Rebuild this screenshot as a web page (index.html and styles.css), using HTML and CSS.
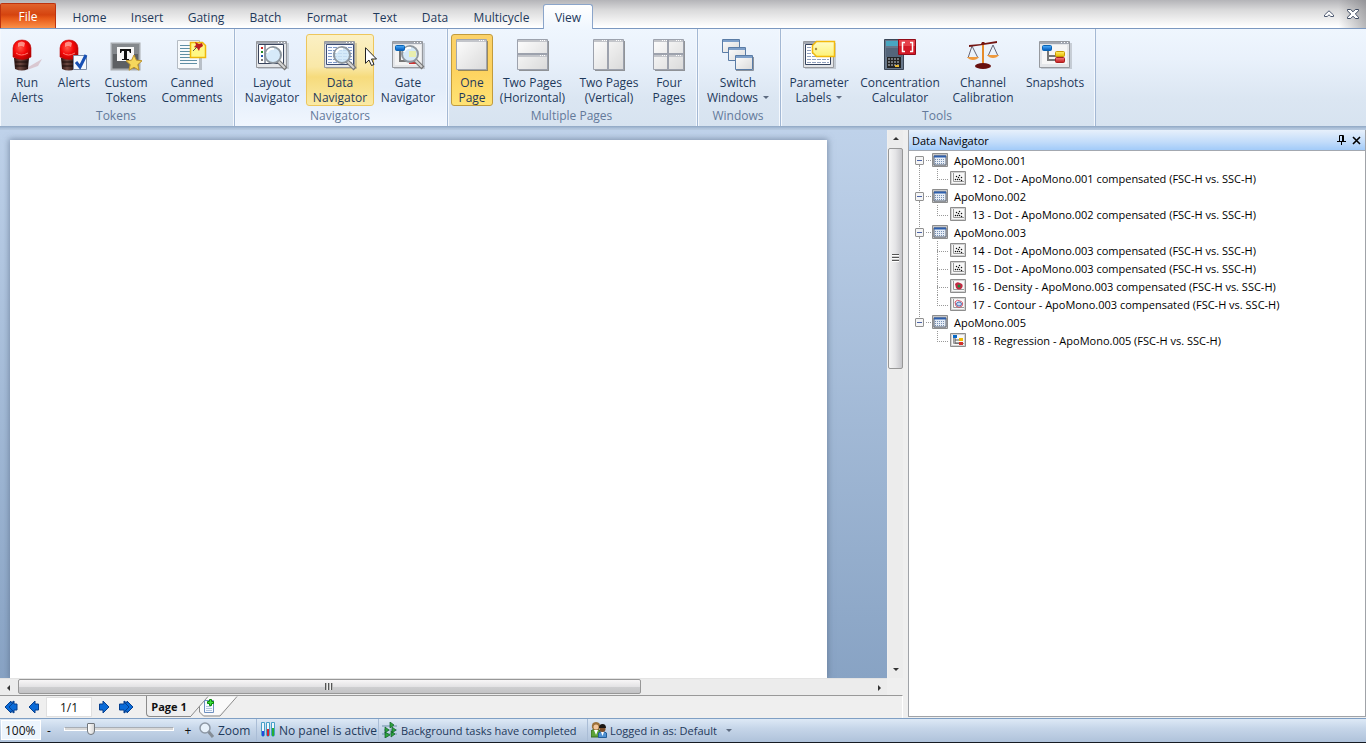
FILE: index.html
```html
<!DOCTYPE html>
<html lang="en">
<head>
<meta charset="utf-8">
<title>Data Navigator</title>
<link rel="stylesheet" href="styles.css">
</head>
<body>
<svg class="defs" aria-hidden="true">
  <defs>
    <linearGradient id="pg" x1="0" y1="0" x2="1" y2="1"><stop offset="0" stop-color="#fdfdfd"/><stop offset="1" stop-color="#dadada"/></linearGradient>
    <radialGradient id="dome" cx=".4" cy=".4" r=".7"><stop offset="0" stop-color="#ff5a4a"/><stop offset=".5" stop-color="#f60808"/><stop offset="1" stop-color="#a80000"/></radialGradient>
    <linearGradient id="base" x1="0" x2="1"><stop offset="0" stop-color="#2a1412"/><stop offset=".4" stop-color="#6d4840"/><stop offset="1" stop-color="#1e0d0c"/></linearGradient>
    <linearGradient id="tag" x1="0" y1="0" x2="0" y2="1"><stop offset="0" stop-color="#fffcc8"/><stop offset="1" stop-color="#fdf274"/></linearGradient>
    <linearGradient id="blue" x1="0" y1="0" x2="0" y2="1"><stop offset="0" stop-color="#4fb0ff"/><stop offset="1" stop-color="#0057b8"/></linearGradient>
    <linearGradient id="red" x1="0" y1="0" x2="0" y2="1"><stop offset="0" stop-color="#f58080"/><stop offset="1" stop-color="#c4191c"/></linearGradient>
    <linearGradient id="yel" x1="0" y1="0" x2="0" y2="1"><stop offset="0" stop-color="#fff36b"/><stop offset="1" stop-color="#e8b800"/></linearGradient>
    <g id="siren">
      <path d="M3 19h15l-1 11q-6 3-13 0z" fill="url(#base)"/>
      <path d="M4 23h13M4 27h13" stroke="#180a08" stroke-width="1"/>
      <path d="M2 18V9q1-8 9-8t9 8v9q-8 5-18 0z" fill="url(#dome)" stroke="#c40a0a" stroke-width=".6"/>
      <path d="M7 4q4-3 7 0l-1 4q-3-2-6 0z" fill="#ffa59a" opacity=".8"/>
      <path d="M5 14q5 4 12 0" stroke="#ff7a70" fill="none"/>
    </g>
    <g id="frame">
      <path d="M2 4h31v26H2z" fill="#000" opacity=".15"/>
      <path d="M.5 2.500h30v26H.5z" fill="#e4e6e9" stroke="#96999e"/>
      <path d="M1 3h29v2H1z" fill="#a3a8b2"/><path d="M22 3.500h1m2 0h1m2 0h1" stroke="#fff"/>
    </g>
    <g id="lens">
      <path d="m22 22 8 8" stroke="#777" stroke-width="4"/><path d="m22 22 7 7" stroke="#d5d5d5" stroke-width="2"/>
      <circle cx="17" cy="16" r="8" fill="#cfe6f8" fill-opacity=".85" stroke="#8e979f" stroke-width="2"/>
      <path d="M11 14q2-5 7-4" stroke="#fff" stroke-width="2" fill="none"/>
    </g>
    <g id="nodes">
      <path d="M9 9v12h12M9 17h10v-4" fill="none" stroke="#777" stroke-width="2"/>
      <rect x="3.500" y="6.500" width="9" height="5" rx="1" fill="url(#blue)" stroke="#0a64b4"/>
      <rect x="16.500" y="12.500" width="9" height="5" rx="1" fill="url(#yel)" stroke="#c99a00"/>
      <rect x="16.500" y="18.500" width="9" height="5" rx="1" fill="url(#red)" stroke="#a8201e"/>
    </g>
    <symbol id="t-sheet" viewBox="0 0 16 14"><path d="M.5.500h15v13H.5z" fill="#c7c7c7" stroke="#8d8d8d"/><path d="M2 3h12v9H2z" fill="#e6edf6" stroke="#58616f"/><path d="M2 2.500h12v2H2z" fill="#2d5fae"/><path d="M3 6.500h10M3 8.500h10M3 10.500h10" stroke="#7890b4" stroke-dasharray="1 1"/></symbol>
    <g id="t-box"><path d="M.5.500h15v13H.5z" fill="#d2d2d2" stroke="#8d8d8d"/><path d="M2 2h12v10H2z" fill="#f8f8f8"/><path d="M3.500 2v8.500H14" fill="none" stroke="#9a9a9a"/></g>
    <symbol id="t-dot" viewBox="0 0 16 14"><use href="#t-box"/><path d="M6 5h1v1H6zM8 6h1v1H8zM9 4h1v1H9zM7 8h1v1H7zM9 8h1v1H9zM11 6h1v1h-1zM11 9h1v1h-1zM5 8h1v1H5z" fill="#111" stroke="#111" stroke-width=".3"/></symbol>
    <symbol id="t-density" viewBox="0 0 16 14"><use href="#t-box"/><path d="M5 5q2-3 5-1 4 1 2 5-3 3-6 0z" fill="#c22943"/><circle cx="9" cy="7" r="1.500" fill="#198b3b"/></symbol>
    <symbol id="t-contour" viewBox="0 0 16 14"><use href="#t-box"/><path d="M5 5q2-3 5-1 4 1 2 5-3 3-6 0z" fill="none" stroke="#d15367"/><ellipse cx="9" cy="7" rx="2.500" ry="2" fill="#c9dcf6" stroke="#4671b5"/></symbol>
    <symbol id="t-reg" viewBox="0 0 16 14"><use href="#t-box"/><path d="M5 4v6h5M5 7h5" stroke="#555" fill="none"/><path d="M3 2h4v3H3z" fill="#0768c6"/><path d="M9 5h4v3H9z" fill="#edb900"/><path d="M9 9h4v3H9z" fill="#d2322e"/></symbol>
  </defs>
</svg>

<header class="tabbar">
  <nav class="tabs" aria-label="Ribbon tabs">
    <button class="file">File</button>
    <button class="tab tab-home">Home</button>
    <button class="tab tab-insert">Insert</button>
    <button class="tab tab-gating">Gating</button>
    <button class="tab tab-batch">Batch</button>
    <button class="tab tab-format">Format</button>
    <button class="tab tab-short">Text</button>
    <button class="tab tab-short">Data</button>
    <button class="tab tab-multi">Multicycle</button>
    <button class="tab tab-short active">View</button>
  </nav>
  <div class="winbtns">
    <button aria-label="Minimize ribbon"><svg width="10" height="8" viewBox="0 0 10 8"><path d="M.5 5 5 .8 9.500 5v1.500H6.800L5 4.800 3.200 6.500H.5z" fill="#fff" stroke="#4c5870"/></svg></button>
    <button aria-label="Close"><svg width="12" height="10" viewBox="0 0 12 10"><path d="M.5.500h3.200L6 2.800 8.300.500h3.200v1.300L8.300 5l3.200 3.200v1.300H8.300L6 7.200 3.700 9.500H.5V8.200L3.700 5 .5 1.800z" fill="#fff" stroke="#3d4a60"/></svg></button>
  </div>
</header>

<section class="ribbon">
  <div class="group">
    <div class="tools">
      <button class="tool w-48"><svg class="ico" viewBox="0 0 32 32"><path d="M14 30 31 20l-4 7-11 4z" fill="#c58b93" opacity=".4"/><use href="#siren"/></svg><span>Run<br>Alerts</span></button>
      <button class="tool w-46"><svg class="ico" viewBox="0 0 32 32"><use href="#siren"/><path d="M15.500 16.500h13v14h-13z" fill="#f4f8fd" stroke="#7c8da6"/><path d="m18 23 4 5 6-12" fill="none" stroke="#1750b5" stroke-width="3"/></svg><span>Alerts</span></button>
      <button class="tool w-58"><svg class="ico" viewBox="0 0 32 32"><path d="M1.500 4.500h28v26h-28z" fill="#5d6063" stroke="#a9adb1" stroke-width="2"/><path d="M2 5h27v10H2z" fill="#85898d"/><path d="M7 8h17v14H7z" fill="#f7f7f7"/><path d="M10 10h11v4h-1l-1-2h-2v8h2v1h-7v-1h2v-8h-2l-1 2h-1z" fill="#111"/><path d="m24 16 2.400 5.200 5.600.6-4.200 3.800 1.200 5.600-5-2.900-5 2.900 1.200-5.600-4.200-3.800 5.600-.6z" fill="#f5d75c" stroke="#bd922a"/></svg><span>Custom<br>Tokens</span></button>
      <button class="tool w-74"><svg class="ico" viewBox="0 0 32 32"><path d="M3 3h23v28H3z" opacity=".2"/><path d="M1.500 1.500h22v28h-22z" fill="#f7fafc" stroke="#b5bcc4"/><path d="M4 6.500h10M4 9.500h10M4 12.500h10M4 15.500h10M4 18.500h17M4 21.500h17M4 24.500h17" stroke="#5f8fa5"/><path d="M14.500 3.500h12l3 3v12h-15z" fill="#fff885" stroke="#efb70a" stroke-width="1.500"/><path d="m19 3 4 2 3-1 1 3-3 2-1 3-2-3-3-1 2-2z" fill="#c02020"/><path d="m21 8-4 4" stroke="#555"/></svg><span>Canned<br>Comments</span></button>
    </div>
    <h2>Tokens</h2>
  </div>
  <div class="group hot">
    <div class="tools">
      <button class="tool w-68"><svg class="ico" viewBox="0 0 32 32"><use href="#frame"/><path d="M2.500 5.500h25v19h-25z" fill="#fff" stroke="#39445c"/><path d="M9 6v18" stroke="#39445c"/><path d="M5 8h2v2H5z" fill="#c22"/><path d="M5 12h2v2H5z" fill="#282"/><path d="M5 16h2v2H5z" fill="#25a"/><path d="M5 20h2v2H5z" fill="#777"/><use href="#lens"/></svg><span>Layout<br>Navigator</span></button>
      <button class="tool w-68 hover"><svg class="ico" viewBox="0 0 32 32"><use href="#frame"/><path d="M2.500 5.500h27v20h-27z" fill="#f8faff" stroke="#3b4c74"/><path d="M4 8.500h24M4 11.500h24M4 14.500h24M4 17.500h24M4 20.500h24M4 23.500h24" stroke="#7e9ac9" stroke-dasharray="4 1"/><use href="#lens" x="1"/></svg><span>Data<br>Navigator</span>
        <svg class="cursor" viewBox="0 0 12 19"><path d="M.5.700v15.600L4 13l2.500 5.500 2.500-1L6.500 12h5z" fill="#fff" stroke="#222"/></svg></button>
      <button class="tool w-68"><svg class="ico" viewBox="0 0 32 32"><use href="#frame"/><path d="M3 6h26v20H3z" fill="#f3f3f3"/><path d="M8 11v11h9" fill="none" stroke="#777" stroke-width="2"/><path d="M17 21h8v4h-8z" fill="#c33"/><use href="#lens" x="1" y="-1"/><rect x="3.500" y="6.500" width="9" height="5" rx="1" fill="url(#blue)" stroke="#0a64b4"/><path d="M17 12h7v6h-7z" fill="#f0f090" opacity=".7"/></svg><span>Gate<br>Navigator</span></button>
    </div>
    <h2>Navigators</h2>
  </div>
  <div class="group">
    <div class="tools">
      <button class="tool w-42 checked"><svg class="ico" viewBox="0 0 32 32"><path d="M2 2h30v30H2z" fill="#555" opacity=".6"/><path d="M.5.500h30v30H.5z" fill="url(#pg)" stroke="#a0a5b0"/><path d="M1 2h29" stroke="#c3c5ca" stroke-width="2"/><path d="M23 1.500h6" stroke="#fff" stroke-dasharray="1 1"/></svg><span>One<br>Page</span></button>
      <button class="tool w-78"><svg class="ico" viewBox="0 0 32 32"><path d="M2 2h30v30H2z" fill="#555" opacity=".6"/><path d="M.5.500h30v30H.5z" fill="url(#pg)" stroke="#9da2ad"/><path d="M1 2h29M1 17h29" stroke="#c3c5ca" stroke-width="2"/><path d="M1 15h29" stroke="#9da2ad" stroke-width="2"/><path d="M23 1.500h6m-6 15h6" stroke="#fff" stroke-dasharray="1 1"/></svg><span>Two Pages<br>(Horizontal)</span></button>
      <button class="tool w-74"><svg class="ico" viewBox="0 0 32 32"><path d="M2 2h30v30H2z" fill="#555" opacity=".6"/><path d="M.5.500h30v30H.5z" fill="url(#pg)" stroke="#9da2ad"/><path d="M1 2h29" stroke="#c3c5ca" stroke-width="2"/><path d="M15 1v29" stroke="#9da2ad" stroke-width="2"/><path d="M9 1.500h5m9 0h6" stroke="#fff" stroke-dasharray="1 1"/></svg><span>Two Pages<br>(Vertical)</span></button>
      <button class="tool w-46"><svg class="ico" viewBox="0 0 32 32"><path d="M2 2h30v30H2z" fill="#555" opacity=".6"/><path d="M.5.500h30v30H.5z" fill="url(#pg)" stroke="#9da2ad"/><path d="M1 2h29M1 17h29" stroke="#c3c5ca" stroke-width="2"/><path d="M15 1v29M1 15h29" stroke="#9da2ad" stroke-width="2"/><path d="M9 1.500h5m9 0h6m-20 15h5m9 0h6" stroke="#fff" stroke-dasharray="1 1"/></svg><span>Four<br>Pages</span></button>
    </div>
    <h2>Multiple Pages</h2>
  </div>
  <div class="group">
    <div class="tools">
      <button class="tool w-74"><svg class="ico" viewBox="0 0 32 32"><g fill="url(#pg)" stroke="#5a7ca6"><path d="M.5.500h17v13H.5z"/><path d="M6.500 8.500h17v13h-17z"/><path d="M13.500 16.500h17v14h-17z"/></g><path d="M1 2h16M7 10h16M14 18h16" stroke="#7d9fc9" stroke-width="2"/><path d="M14 31.500h17.500V18" fill="none" stroke="#8b929c"/></svg><span>Switch<br><span class="drop">Windows</span></span></button>
    </div>
    <h2>Windows</h2>
  </div>
  <div class="group">
    <div class="tools">
      <button class="tool w-70"><svg class="ico" viewBox="0 0 32 32"><use href="#frame"/><path d="M2.500 5.500h25v20h-25z" fill="#fff" stroke="#35445f"/><path d="M4 8.500h22M4 11.500h22M4 14.500h22M4 17.500h22M4 20.500h22M4 23.500h22" stroke="#91a1bf" stroke-dasharray="4 1"/><path d="m9.500 6.500 4-4h18v15h-18l-4-4z" fill="url(#tag)" stroke="#f3b90b" stroke-width="1.500"/><circle cx="13" cy="10" r="1.200" fill="#a58d42"/></svg><span>Parameter<br><span class="drop">Labels</span></span></button>
      <button class="tool w-92"><svg class="ico" viewBox="0 0 32 32"><path d="M.5.500h19v30H.5z" fill="#68778a" stroke="#3b4758"/><path d="M2 2h14v5H2z" fill="#49a6c1"/><path d="M2 9h16v9H2z" fill="#54657a"/><path d="M3 18h14v11H3z" fill="#222"/><path d="M4 20h12M4 23h12M4 26h12" stroke="#c5ccd4" stroke-dasharray="2 1"/><path d="M11 26h4v2h-4z" fill="#e8ba35"/><path d="M14.500.500h17v15h-17z" fill="#d31927" stroke="#920c19"/><path d="M15 1h16v6H15z" fill="#f15a62" opacity=".6"/><path d="M21 3.500h-2.500v9H21M26 3.500h2.500v9H26" stroke="#fff" stroke-width="1.500" fill="none"/></svg><span>Concentration<br>Calculator</span></button>
      <button class="tool w-74"><svg class="ico" viewBox="0 0 32 32"><path d="M5 7 1 19m4-12 6 12M26 6l-5 11m5-11 5 11" stroke="#667" fill="none"/><path d="M16 4v22" stroke="#e58b2c" stroke-width="2"/><path d="m2 6 12-1 1-2h2l1 1 12-2v2L2 8z" fill="#741512"/><path d="M0 18h12q-2 3-6 3t-6-3M20 16h12q-2 3-6 3t-6-3" fill="#ef9a3e"/><ellipse cx="16" cy="27" rx="8" ry="3" fill="#68100e"/></svg><span>Channel<br>Calibration</span></button>
      <button class="tool w-70"><svg class="ico" viewBox="0 0 32 32"><use href="#frame"/><path d="M3 6h25v19H3z" fill="#f6f6f6"/><use href="#nodes"/></svg><span>Snapshots</span></button>
    </div>
    <h2>Tools</h2>
  </div>
</section>

<main class="work">
  <section class="editor">
    <div class="view">
      <div class="canvas"><div class="page"></div></div>
      <div class="vbar"><button class="arrow" aria-label="Scroll up"><i class="tri up"></i></button><div class="vtrack"><div class="vthumb"><i class="grip-v"></i></div></div><button class="arrow" aria-label="Scroll down"><i class="tri down"></i></button></div>
    </div>
    <div class="hbar"><button class="arrow" aria-label="Scroll left"><i class="tri left"></i></button><div class="htrack"><div class="hthumb"><i class="grip-h"></i></div></div><button class="arrow" aria-label="Scroll right"><i class="tri right"></i></button></div>
    <div class="pager">
      <button aria-label="First page"><svg width="16" height="14" viewBox="0 0 16 14"><path d="M1 7 7 1v2l3-2v3h3v6h-3v3L7 11v2z" fill="#0a6bd8" stroke="#053f8e"/><path d="m10 2-5 5 5 5" fill="none" stroke="#053f8e"/></svg></button>
      <button aria-label="Previous page"><svg width="12" height="14" viewBox="0 0 12 14"><path d="m1 7 6-6v3h3.500v6H7v3z" fill="#0a6bd8" stroke="#053f8e"/></svg></button>
      <input class="pageno" aria-label="Page number" value="1/1">
      <button aria-label="Next page"><svg width="12" height="14" viewBox="0 0 12 14"><path d="M11 7 5 1v3H1.500v6H5v3z" fill="#0a6bd8" stroke="#053f8e"/></svg></button>
      <button aria-label="Last page"><svg width="16" height="14" viewBox="0 0 16 14"><path d="M15 7 9 1v2L6 1v3H1.500v6H6v3l3-2v2z" fill="#0a6bd8" stroke="#053f8e"/><path d="m6 2 5 5-5 5" fill="none" stroke="#053f8e"/></svg></button>
      <button class="sheet">Page 1</button>
      <button class="addsheet" aria-label="Add page"><svg width="50" height="22" viewBox="0 0 50 22"><path d="m9 10 8-9h29L28 19H13l-4-4z" fill="#fff" opacity=".7"/><path d="M0 20 17 .5M8.500 10v6l4 4H29L46 .5" fill="none" stroke="#8b8b8b"/><path d="M13.500 4.500h9v12h-9z" fill="#f5f9ff" stroke="#6d8fbf"/><path d="M15 10.500h5m-5 2h6m-6 2h6" stroke="#b0c3dd"/><path d="M16.500 5.500h2v-2h2v2h2v2h-2v2h-2v-2h-2z" fill="#3be03b" stroke="#078907"/></svg></button>
    </div>
  </section>
  <aside class="nav">
    <header class="navhead"><h1>Data Navigator</h1>
      <button aria-label="Pin"><svg width="9" height="10" viewBox="0 0 9 10"><path d="M2.500 6V.5h4V6M0 6.500h9M4.500 7v3M5.500 1v5" fill="none" stroke="#000"/></svg></button>
      <button aria-label="Close panel"><svg width="9" height="9" viewBox="0 0 9 9"><path d="m1 1 7 7m0-7L1 8" stroke="#000" stroke-width="1.600"/></svg></button>
    </header>
    <ul class="tree">
      <li><div class="node"><button class="exp" aria-label="Collapse"></button><i class="dots"></i><svg><use href="#t-sheet"/></svg>ApoMono.001</div>
        <ul><li><div class="leaf"><svg><use href="#t-dot"/></svg>12 - Dot - ApoMono.001 compensated (FSC-H vs. SSC-H)</div></li></ul></li>
      <li><div class="node"><button class="exp" aria-label="Collapse"></button><i class="dots"></i><svg><use href="#t-sheet"/></svg>ApoMono.002</div>
        <ul><li><div class="leaf"><svg><use href="#t-dot"/></svg>13 - Dot - ApoMono.002 compensated (FSC-H vs. SSC-H)</div></li></ul></li>
      <li><div class="node"><button class="exp" aria-label="Collapse"></button><i class="dots"></i><svg><use href="#t-sheet"/></svg>ApoMono.003</div>
        <ul><li><div class="leaf"><svg><use href="#t-dot"/></svg>14 - Dot - ApoMono.003 compensated (FSC-H vs. SSC-H)</div></li>
        <li><div class="leaf"><svg><use href="#t-dot"/></svg>15 - Dot - ApoMono.003 compensated (FSC-H vs. SSC-H)</div></li>
        <li><div class="leaf"><svg><use href="#t-density"/></svg>16 - Density - ApoMono.003 compensated (FSC-H vs. SSC-H)</div></li>
        <li><div class="leaf"><svg><use href="#t-contour"/></svg>17 - Contour - ApoMono.003 compensated (FSC-H vs. SSC-H)</div></li></ul></li>
      <li><div class="node"><button class="exp" aria-label="Collapse"></button><i class="dots"></i><svg><use href="#t-sheet"/></svg>ApoMono.005</div>
        <ul><li><div class="leaf"><svg><use href="#t-reg"/></svg>18 - Regression - ApoMono.005 (FSC-H vs. SSC-H)</div></li></ul></li>
    </ul>
  </aside>
</main>

<footer class="status">
  <input class="percent" aria-label="Zoom percent" value="100%">
  <button class="step">-</button>
  <input class="slider" type="range" aria-label="Zoom" min="0" max="100" value="22">
  <button class="step">+</button>
  <button class="item i-zoom"><svg viewBox="0 0 16 16"><path d="m9 9 5 6" stroke="#858d96" stroke-width="3"/><circle cx="6" cy="6" r="5" fill="#e8f2fb" stroke="#8d98a5" stroke-width="1.500"/></svg>Zoom</button>
  <button class="item i-panel"><svg viewBox="0 0 16 16"><g fill="#eef6fd" stroke="#46a0c8"><path d="M1.500.500h3v13q-1.500 2-3 0zM6.500.500h3v13q-1.500 2-3 0zM11.500.500h3v13q-1.500 2-3 0z"/></g><path d="M2 9h2v5H2z" fill="#2846dd"/><path d="M7 7h2v7H7z" fill="#d12333"/><path d="M12 6h2v8h-2z" fill="#25ad35"/></svg>No panel is active</button>
  <button class="item i-task"><svg viewBox="0 0 16 16"><path d="M0 4h15M2 8h13M0 12h15" stroke="#6a8fa6"/><path d="m8 0 4 3-4 3zM3 5l4 3-4 3zM10 5l4 3-4 3zM3 10l5 3-5 3zM9 9l4 3-4 3z" fill="#2da43b" stroke="#0c5c25" stroke-width=".7"/></svg>Background tasks have completed</button>
  <button class="item"><svg viewBox="0 0 16 16"><path d="M0 15V9l3-2h4l2 2v6z" fill="#5ca336" stroke="#366b20"/><path d="M3 8h4l-2 5z" fill="#fff"/><path d="M1 6q-1-6 4-6t4 6l-2 2H3z" fill="#9b713b"/><circle cx="5" cy="5" r="2.500" fill="#f3c79c"/><path d="M7.500 15.500V11l2-1h4l2 1v4.500z" fill="#4f91d2" stroke="#245e99"/><circle cx="11.500" cy="7" r="3" fill="#80502b"/><path d="M8 6q0-4 3.500-4T15 6z" fill="#1b1715"/><path d="M10 10h3l-1.500 4z" fill="#fff"/></svg><span class="drop">Logged in as: Default</span></button>
</footer>
</body>
</html>
```
FILE: styles.css
```css
* { box-sizing: border-box; }
body {
  margin: 0;
  height: 100vh;
  display: flex;
  flex-direction: column;
  overflow: hidden;
  background: #efefef;
  color: #1e395b;
  font: 12px/15px "Open Sans", "Noto Sans", sans-serif;
}
button, input { font: inherit; color: inherit; padding: 0; margin: 0; border: 0; background: none; }
h1, h2 { margin: 0; font: inherit; }
ul { list-style: none; margin: 0; padding: 0; }
.defs { position: absolute; width: 0; height: 0; }

/* tab strip */
.tabbar {
  flex: none;
  height: 29px;
  display: flex;
  justify-content: space-between;
  border-bottom: 1px solid #7b98c0;
  background: linear-gradient(90deg, transparent 98%, #77777b88), linear-gradient(#b4b4b8, #d9d9da 35%, #fff 96%);
}
.tabs { display: flex; align-items: flex-end; }
.file {
  width: 56px;
  height: 25px;
  margin-right: 4px;
  color: #fff;
  border: 1px solid #bd320e;
  border-bottom: 0;
  border-radius: 2px 2px 0 0;
  background: linear-gradient(#e0622c, #d5440f 45%, #e75a19 60%, #fb9048);
}
.tab { height: 24px; padding-top: 3px; }
.tab-home { width: 59px; }
.tab-insert { width: 56px; }
.tab-gating { width: 62px; }
.tab-batch { width: 57px; }
.tab-format { width: 66px; }
.tab-short { width: 50px; }
.tab-multi { width: 83px; }
.tab.active {
  height: 25px;
  margin-bottom: -1px;
  padding-top: 1px;
  border: 1px solid #8ba5ca;
  border-bottom: 0;
  border-radius: 3px 3px 0 0;
  background: linear-gradient(#fff, #eff6fe);
}
.winbtns { display: flex; align-items: center; gap: 13px; padding-right: 7px; }
.winbtns button, .navhead button, .pager button { display: flex; align-items: center; }

/* ribbon */
.ribbon {
  flex: none;
  height: 101px;
  display: flex;
  padding-bottom: 3px;
  background: linear-gradient(#eff6fe, #e9f1fb 30px, #dbe6f2 70px, #d7e3f0 97px, #8fa7c4 97px, #b5c8df 100px);
}
.group {
  height: 97px;
  padding: 5px 5px 0 3px;
  border-right: 1px solid #a3b8d4;
  box-shadow: inset -1px 0 #f4f8fd, inset 1px 0 #f4f8fd;
}
.group.hot { background: linear-gradient(#eaf2fd, #e3edfa 60%, #f0f6fe); }
.group h2 { height: 20px; padding-top: 2px; text-align: center; color: #63799a; }
.tools { display: flex; height: 72px; }
.tool {
  position: relative;
  display: flex;
  flex-direction: column;
  align-items: center;
  height: 72px;
  padding-top: 4px;
  border: 1px solid transparent;
  border-radius: 3px;
  white-space: nowrap;
}
.ico { display: block; flex: none; width: 32px; height: 32px; margin-bottom: 4px; overflow: visible; }
.hover { border-color: #edc65c; background: linear-gradient(#fbf0c4, #f9e8a8 45%, #f6db7c 60%, #faeaa6); }
.checked { border-color: #c29b3c; background: linear-gradient(#fbd26a, #fdd25f 50%, #ffe374); }
.w-42 { width: 42px; }
.w-46 { width: 46px; }
.w-48 { width: 48px; }
.w-58 { width: 58px; }
.w-68 { width: 68px; }
.w-70 { width: 70px; }
.w-74 { width: 74px; }
.w-78 { width: 79px; }
.w-92 { width: 92px; }
.drop::after {
  content: "";
  display: inline-block;
  margin-left: 5px;
  vertical-align: 3px;
  border: 3px solid transparent;
  border-top-color: #5d6b80;
  border-bottom: 0;
}
.cursor { position: absolute; left: 58px; top: 12px; width: 12px; height: 19px; z-index: 2; }

/* work area */
.work { flex: 1; min-height: 0; display: flex; gap: 5px; }
.editor { flex: 1; min-width: 0; display: flex; flex-direction: column; }
.view { flex: 1; min-height: 0; display: flex; }
.canvas { flex: 1; padding: 10px 60px 0 10px; background: linear-gradient(#bfd2ea, #88a3c4); overflow: hidden; }
.page { height: 100%; background: #fff; box-shadow: 0 0 6px 1px #56698499; }
.vbar { width: 15px; margin-left: 1px; display: flex; flex-direction: column; background: #ececec; }
.hbar { height: 17px; margin-right: 16px; display: flex; background: #ececec; border-top: 1px solid #e3e3e3; }
.arrow { flex: none; width: 16px; height: 17px; display: grid; place-items: center; }
.tri { border: 3px solid transparent; }
.up { border-bottom-color: #333; border-top: 0; }
.down { border-top-color: #333; border-bottom: 0; }
.left { border-right-color: #333; border-left: 0; }
.right { border-left-color: #333; border-right: 0; }
.vtrack { flex: 1; padding-top: 1px; }
.htrack { flex: 1; padding-left: 2px; }
.vthumb, .hthumb { display: grid; place-items: center; border: 1px solid #979797; border-radius: 2px; }
.vthumb { width: 15px; height: 43%; background: linear-gradient(90deg, #f5f5f5, #e4e4e6 50%, #c5c5c9); }
.hthumb { height: 15px; width: 73%; background: linear-gradient(#f8f6f7, #e4e3e5 50%, #cfcfd1 52%, #c3c3c5); }
.grip-v { width: 7px; height: 8px; background: repeating-linear-gradient(#555 0 1px, #fff 1px 2px, #ccc 2px 3px); }
.grip-h { width: 8px; height: 7px; background: repeating-linear-gradient(90deg, #555 0 1px, #bbb 1px 2px, #eee 2px 3px); }
.pager { height: 23px; display: flex; align-items: center; padding-left: 4px; border-top: 1px solid #999; border-right: 1px solid #fff; }
.pager button { height: 22px; margin-right: 8px; }
.pager .pageno { width: 46px; height: 20px; margin: 0 6px 0 -2px; text-align: center; background: #fff; border: 1px solid #e0e0e0; color: #111; }
.pager .sheet {
  height: 21px;
  width: 45px;
  margin: 0 0 0 4px;
  justify-content: center;
  align-self: flex-start;
  font-weight: 700;
  font-size: 11px;
  white-space: nowrap;
  color: #111;
  border-left: 1px solid #8b8b8b;
  border-bottom: 1px solid #8b8b8b;
  border-radius: 0 0 0 4px;
}
.pager .addsheet { margin: 0; }

/* navigator panel */
.nav { width: 458px; flex: none; margin-bottom: 1px; background: #fff; border: 1px solid #a0a3a8; border-width: 0 1px 1px; font-size: 11px; color: #000; }
.navhead { height: 21px; display: flex; align-items: center; gap: 6px; padding: 0 4px 0 3px; border-bottom: 1px solid #a3a8b0; background: linear-gradient(#e7f0fb, #c2dcfa 60%, #a2cbf9); }
.navhead h1 { flex: 1; }
.tree { padding-left: 6px; }
.tree > li { position: relative; }
.tree > li:not(:last-child)::before { content: ""; position: absolute; left: 4px; top: 14px; bottom: -4px; border-left: 1px dotted #999; }
.node, .leaf { height: 18px; display: flex; align-items: center; white-space: nowrap; }
.tree svg { flex: none; width: 16px; height: 14px; margin-right: 6px; }
.exp { width: 9px; height: 9px; border: 1px solid #919191; border-radius: 1px; background: linear-gradient(#4b63a7, #4b63a7) center / 5px 1px no-repeat, #f5f5f5; }
.dots { width: 5px; margin: 0 1px 0 2px; border-top: 1px dotted #999; }
.tree ul { padding-left: 35px; }
.tree ul li { position: relative; }
.tree ul li::before { content: ""; position: absolute; left: -13px; top: 0; width: 10px; height: 10px; border: dotted #999; border-width: 0 0 1px 1px; }
.tree ul li:not(:last-child)::after { content: ""; position: absolute; left: -13px; top: 9px; height: 9px; border-left: 1px dotted #999; }

/* status bar */
.status {
  flex: none;
  height: 25px;
  display: flex;
  align-items: center;
  padding: 0 0 1px 1px;
  border-top: 1px solid #7f9fc4;
  border-bottom: 1px solid #151a22;
  background: linear-gradient(#dde9f6, #c6d6e9 40%, #afc2da);
}
.percent { width: 40px; height: 20px; padding-left: 3px; background: #edf5fd; border: 1px solid #fff; color: #111; }
.step { width: 16px; color: #111; }
.slider { width: 110px; height: 16px; margin: 0 6px 2px 7px; appearance: none; background: none; }
.slider::-webkit-slider-runnable-track { height: 4px; border: 1px solid #fff; border-top-color: #a7adb5; background: #d8d8d8; }
.slider::-webkit-slider-thumb { appearance: none; width: 8px; height: 12px; margin-top: -5px; border: 1px solid #71767c; border-radius: 1px 1px 4px 4px; background: linear-gradient(90deg, #fff, #d7d7d7); }
.item { flex: none; display: flex; align-items: center; gap: 3px; height: 22px; padding: 0 0 0 3px; border-right: 1px solid #aabdd6; white-space: nowrap; }
.i-task, .item:last-child { font-size: 11px; }
.item svg { flex: none; width: 16px; height: 16px; }
.item:last-child { border: 0; }
.item .drop::after { margin-left: 9px; }
.i-zoom { width: 61px; }
.i-panel { width: 122px; }
.i-task { width: 209px; }
```
